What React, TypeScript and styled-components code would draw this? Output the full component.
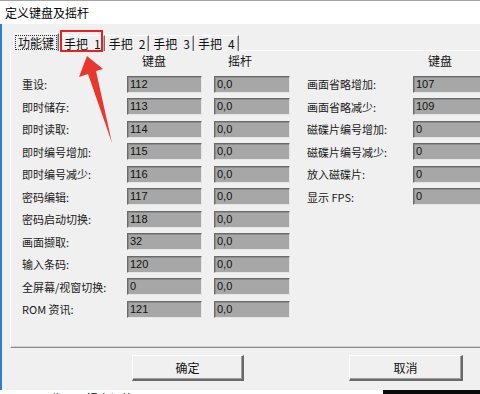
import React from 'react';
import styled, { createGlobalStyle } from 'styled-components';

const GlobalStyle = createGlobalStyle`
  html, body {
    margin: 0;
    padding: 0;
    background: #f0f0f0;
    overflow: hidden;
  }
  body {
    width: 480px;
    height: 394px;
    font-family: "Noto Sans CJK SC", "Liberation Sans", sans-serif;
    color: #111;
  }
`;

const Dialog = styled.div`
  position: relative;
  width: 480px;
  height: 394px;
  overflow: hidden;
  background: #f0f0f0;
`;

const TitleBar = styled.div`
  height: 23px;
  border-top: 1px solid #a3a3a3;
  background: #ffffff;
  display: flex;
  align-items: center;
  padding-left: 5px;
  font-size: 12px;
  line-height: 14px;
  color: #000;
`;

const Body = styled.div`
  height: 357px;
  padding-top: 9px;
  border-left: 2px solid #2b7fd3;
  display: flex;
  flex-direction: column;
`;

const TabStrip = styled.div`
  display: flex;
  align-items: flex-end;
  height: 18px;
  padding-left: 11px;
  margin-bottom: -1px;
  position: relative;
  z-index: 1;
`;

const Tab = styled.div<{ $active?: boolean }>`
  height: ${(p) => (p.$active ? '18px' : '16px')};
  box-sizing: border-box;
  display: flex;
  align-items: center;
  padding: 0 ${(p) => (p.$active ? '2px' : '3px')};
  font-size: 12px;
  line-height: 14px;
  white-space: pre;
  background: #f0f0f0;
  border-top: 1px solid #ffffff;
  border-left: 1px solid ${(p) => (p.$active ? '#ffffff' : 'transparent')};
  border-right: 1px solid #6e6e6e;
  box-shadow: inset -1px 0 0 #b4b4b4;
  margin-right: ${(p) => (p.$active ? '1px' : '0')};
`;

const FocusText = styled.span`
  outline: 1px dotted #333;
  padding: 0 2px;
  line-height: 13px;
`;

const Panel = styled.div`
  margin-left: 8px;
  height: 298px;
  box-sizing: border-box;
  border-top: 1px solid #ffffff;
  border-left: 1px solid #ffffff;
  border-bottom: 1px solid #8d8d8d;
  box-shadow: inset 0 -1px 0 #cfcfcf;
  padding: 2px 0 0 11px;
`;

const ColumnTemplate = `105px 87px 93px 106px 80px`;

const HeaderRow = styled.div`
  display: grid;
  grid-template-columns: ${ColumnTemplate};
  height: 20px;
  align-items: start;
`;

const HeaderCell = styled.div<{ $pad?: number }>`
  padding-left: ${(p) => p.$pad ?? 15}px;
  font-size: 12px;
  line-height: 16px;
  color: #111;
`;

const Row = styled.div`
  display: grid;
  grid-template-columns: ${ColumnTemplate};
  height: 22.5px;
  align-items: center;
`;

const Label = styled.div`
  font-size: 11px;
  line-height: 14px;
  white-space: nowrap;
  color: #1a1a1a;
`;

const ValueBox = styled.div<{ $w?: number }>`
  width: ${(p) => p.$w ?? 75}px;
  height: 17px;
  box-sizing: border-box;
  background: #a7a7a7;
  border: 1px solid;
  border-color: #6a6a6a #e6e6e6 #e6e6e6 #6a6a6a;
  box-shadow: inset 1px 1px 0 #8c8c8c;
  padding-left: 2px;
  font-family: "Liberation Sans", "DejaVu Sans", sans-serif;
  font-size: 11px;
  line-height: 15px;
  color: #111;
  overflow: hidden;
`;

const ButtonRow = styled.div`
  display: flex;
  margin-top: 7px;
  padding-left: 130px;
  gap: 105px;
`;

const Button = styled.div<{ $w: number }>`
  width: ${(p) => p.$w}px;
  height: 26px;
  box-sizing: border-box;
  display: flex;
  align-items: center;
  justify-content: center;
  font-size: 12px;
  background: #f0f0f0;
  border-top: 1px solid #ffffff;
  border-left: 1px solid #ffffff;
  border-right: 2px solid #696969;
  border-bottom: 2px solid #696969;
  box-shadow: inset -1px -1px 0 #a0a0a0;
  color: #111;
`;

const Underlay = styled.div`
  height: 4px;
  display: flex;
  overflow: hidden;
  background: #ffffff;
`;

const UnderText = styled.div`
  width: 355px;
  padding: 2px 0 0 28px;
  font-size: 12px;
  line-height: 14px;
  color: #000;
  white-space: nowrap;
`;

const UnderDark = styled.div`
  flex: 1;
  background: #0a0a0a;
`;

const MarkBox = styled.div`
  position: absolute;
  left: 60px;
  top: 30px;
  width: 43px;
  height: 22px;
  box-sizing: border-box;
  border: 2px solid #e3231f;
  z-index: 3;
`;

const Arrow = styled.svg`
  position: absolute;
  left: 76px;
  top: 54px;
  z-index: 3;
`;

type Item = { label: string; kb: string; joy?: string };

const leftRows: Item[] = [
  { label: '重设:', kb: '112', joy: '0,0' },
  { label: '即时储存:', kb: '113', joy: '0,0' },
  { label: '即时读取:', kb: '114', joy: '0,0' },
  { label: '即时编号增加:', kb: '115', joy: '0,0' },
  { label: '即时编号减少:', kb: '116', joy: '0,0' },
  { label: '密码编辑:', kb: '117', joy: '0,0' },
  { label: '密码启动切换:', kb: '118', joy: '0,0' },
  { label: '画面撷取:', kb: '32', joy: '0,0' },
  { label: '输入条码:', kb: '120', joy: '0,0' },
  { label: '全屏幕/视窗切换:', kb: '0', joy: '0,0' },
  { label: 'ROM 资讯:', kb: '121', joy: '0,0' },
];

const rightRows: Item[] = [
  { label: '画面省略增加:', kb: '107' },
  { label: '画面省略减少:', kb: '109' },
  { label: '磁碟片编号增加:', kb: '0' },
  { label: '磁碟片编号减少:', kb: '0' },
  { label: '放入磁碟片:', kb: '0' },
  { label: '显示 FPS:', kb: '0' },
];

const tabs = ['功能键', '手把\u20021', '手把\u20022', '手把\u20023', '手把\u20024'];

export default function App() {
  return (
    <Dialog>
      <GlobalStyle />
      <TitleBar>定义键盘及摇杆</TitleBar>
      <Body>
        <TabStrip>
          {tabs.map((t, i) =>
            i === 0 ? (
              <Tab key={t} $active>
                <FocusText>{t}</FocusText>
              </Tab>
            ) : (
              <Tab key={t}>{t}</Tab>
            )
          )}
        </TabStrip>
        <Panel>
          <HeaderRow>
            <div />
            <HeaderCell>键盘</HeaderCell>
            <HeaderCell $pad={14}>摇杆</HeaderCell>
            <div />
            <HeaderCell>键盘</HeaderCell>
          </HeaderRow>
          {leftRows.map((row, i) => {
            const right = rightRows[i];
            return (
              <Row key={row.label}>
                <Label>{row.label}</Label>
                <ValueBox>{row.kb}</ValueBox>
                <ValueBox $w={76}>{row.joy}</ValueBox>
                {right ? <Label>{right.label}</Label> : <div />}
                {right ? <ValueBox $w={80}>{right.kb}</ValueBox> : <div />}
              </Row>
            );
          })}
        </Panel>
        <ButtonRow>
          <Button $w={112}>确定</Button>
          <Button $w={114}>取消</Button>
        </ButtonRow>
      </Body>
      <Underlay>
        <UnderText>画面撷取 / 视窗切换 FPS</UnderText>
        <UnderDark />
      </Underlay>
      <MarkBox />
      <Arrow width="40" height="95" viewBox="0 0 40 95">
        <polygon points="11,2 27,15 20,17 36,89 12,20 3,23" fill="#e8372c" />
      </Arrow>
    </Dialog>
  );
}
